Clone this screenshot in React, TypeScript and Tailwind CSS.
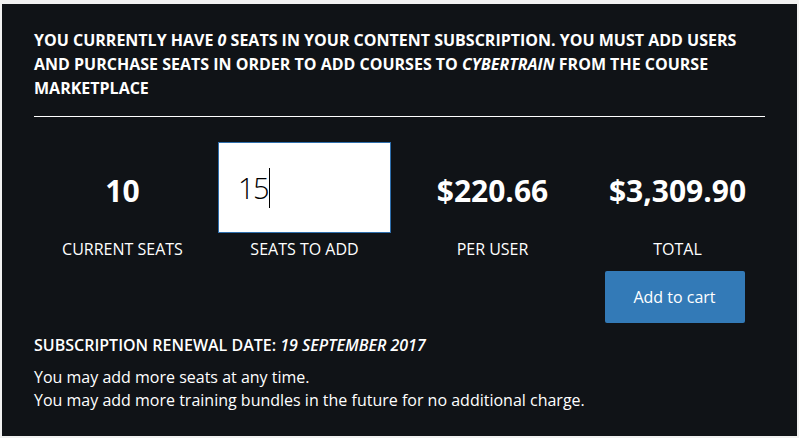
import React from "react";

const font = { fontFamily: '"Open Sans", "Liberation Sans", sans-serif' };

export default function App() {
  return (
    <div
      className="w-[799px] h-[438px] bg-[#f1f1f1] pt-[4px] pl-[2px] pr-[2px] pb-[2px]"
      style={font}
    >
      <div className="h-full bg-[#101317] px-[32px] pt-[24px] text-white">
        <p className="text-[16px] leading-[24px] font-bold uppercase">
          You currently have <em>0</em> seats in your content subscription. You must add users
          and purchase seats in order to add courses to <em>Cybertrain</em> from the course
          marketplace
        </p>
        <div className="mt-[16px] h-px bg-white" />

        <div className="mt-[25px] grid grid-cols-4 ml-[-4px] mr-[-5px]">
          <div className="flex flex-col items-center">
            <div className="h-[91px] flex items-center justify-center pt-[6px] text-[30px] font-bold">10</div>
            <div className="mt-[5px] text-[16px] leading-[22px] uppercase">Current seats</div>
          </div>
          <div className="flex flex-col items-center">
            <div className="ml-[-6px] h-[91px] w-[173px] bg-white border border-[#2f6fad] flex items-center pl-[19px] text-black">
              <span className="text-[29px] font-light tracking-[-1.5px] leading-none">15</span>
              <span className="ml-[1px] w-px h-[40px] bg-black" />
            </div>
            <div className="mt-[5px] mr-[6px] text-[16px] leading-[22px] uppercase">Seats to add</div>
          </div>
          <div className="flex flex-col items-center">
            <div className="h-[91px] flex items-center justify-center pt-[6px] text-[30px] font-bold">$220.66</div>
            <div className="mt-[5px] text-[16px] leading-[22px] uppercase">Per user</div>
          </div>
          <div className="flex flex-col items-center">
            <div className="h-[91px] flex items-center justify-center pt-[6px] text-[30px] font-bold">$3,309.90</div>
            <div className="mt-[5px] text-[16px] leading-[22px] uppercase">Total</div>
            <button className="mt-[11px] mr-[6px] w-[140px] h-[52px] bg-[#337ab7] rounded-[2px] text-[16px] text-white">
              Add to cart
            </button>
          </div>
        </div>

        <p className="mt-[10px] text-[16px] leading-[24px] font-semibold uppercase">
          Subscription renewal date: <em>19 September 2017</em>
        </p>
        <p className="mt-[9px] text-[16px] leading-[23px]">You may add more seats at any time.</p>
        <p className="text-[16px] leading-[23px]">
          You may add more training bundles in the future for no additional charge.
        </p>
      </div>
    </div>
  );
}
